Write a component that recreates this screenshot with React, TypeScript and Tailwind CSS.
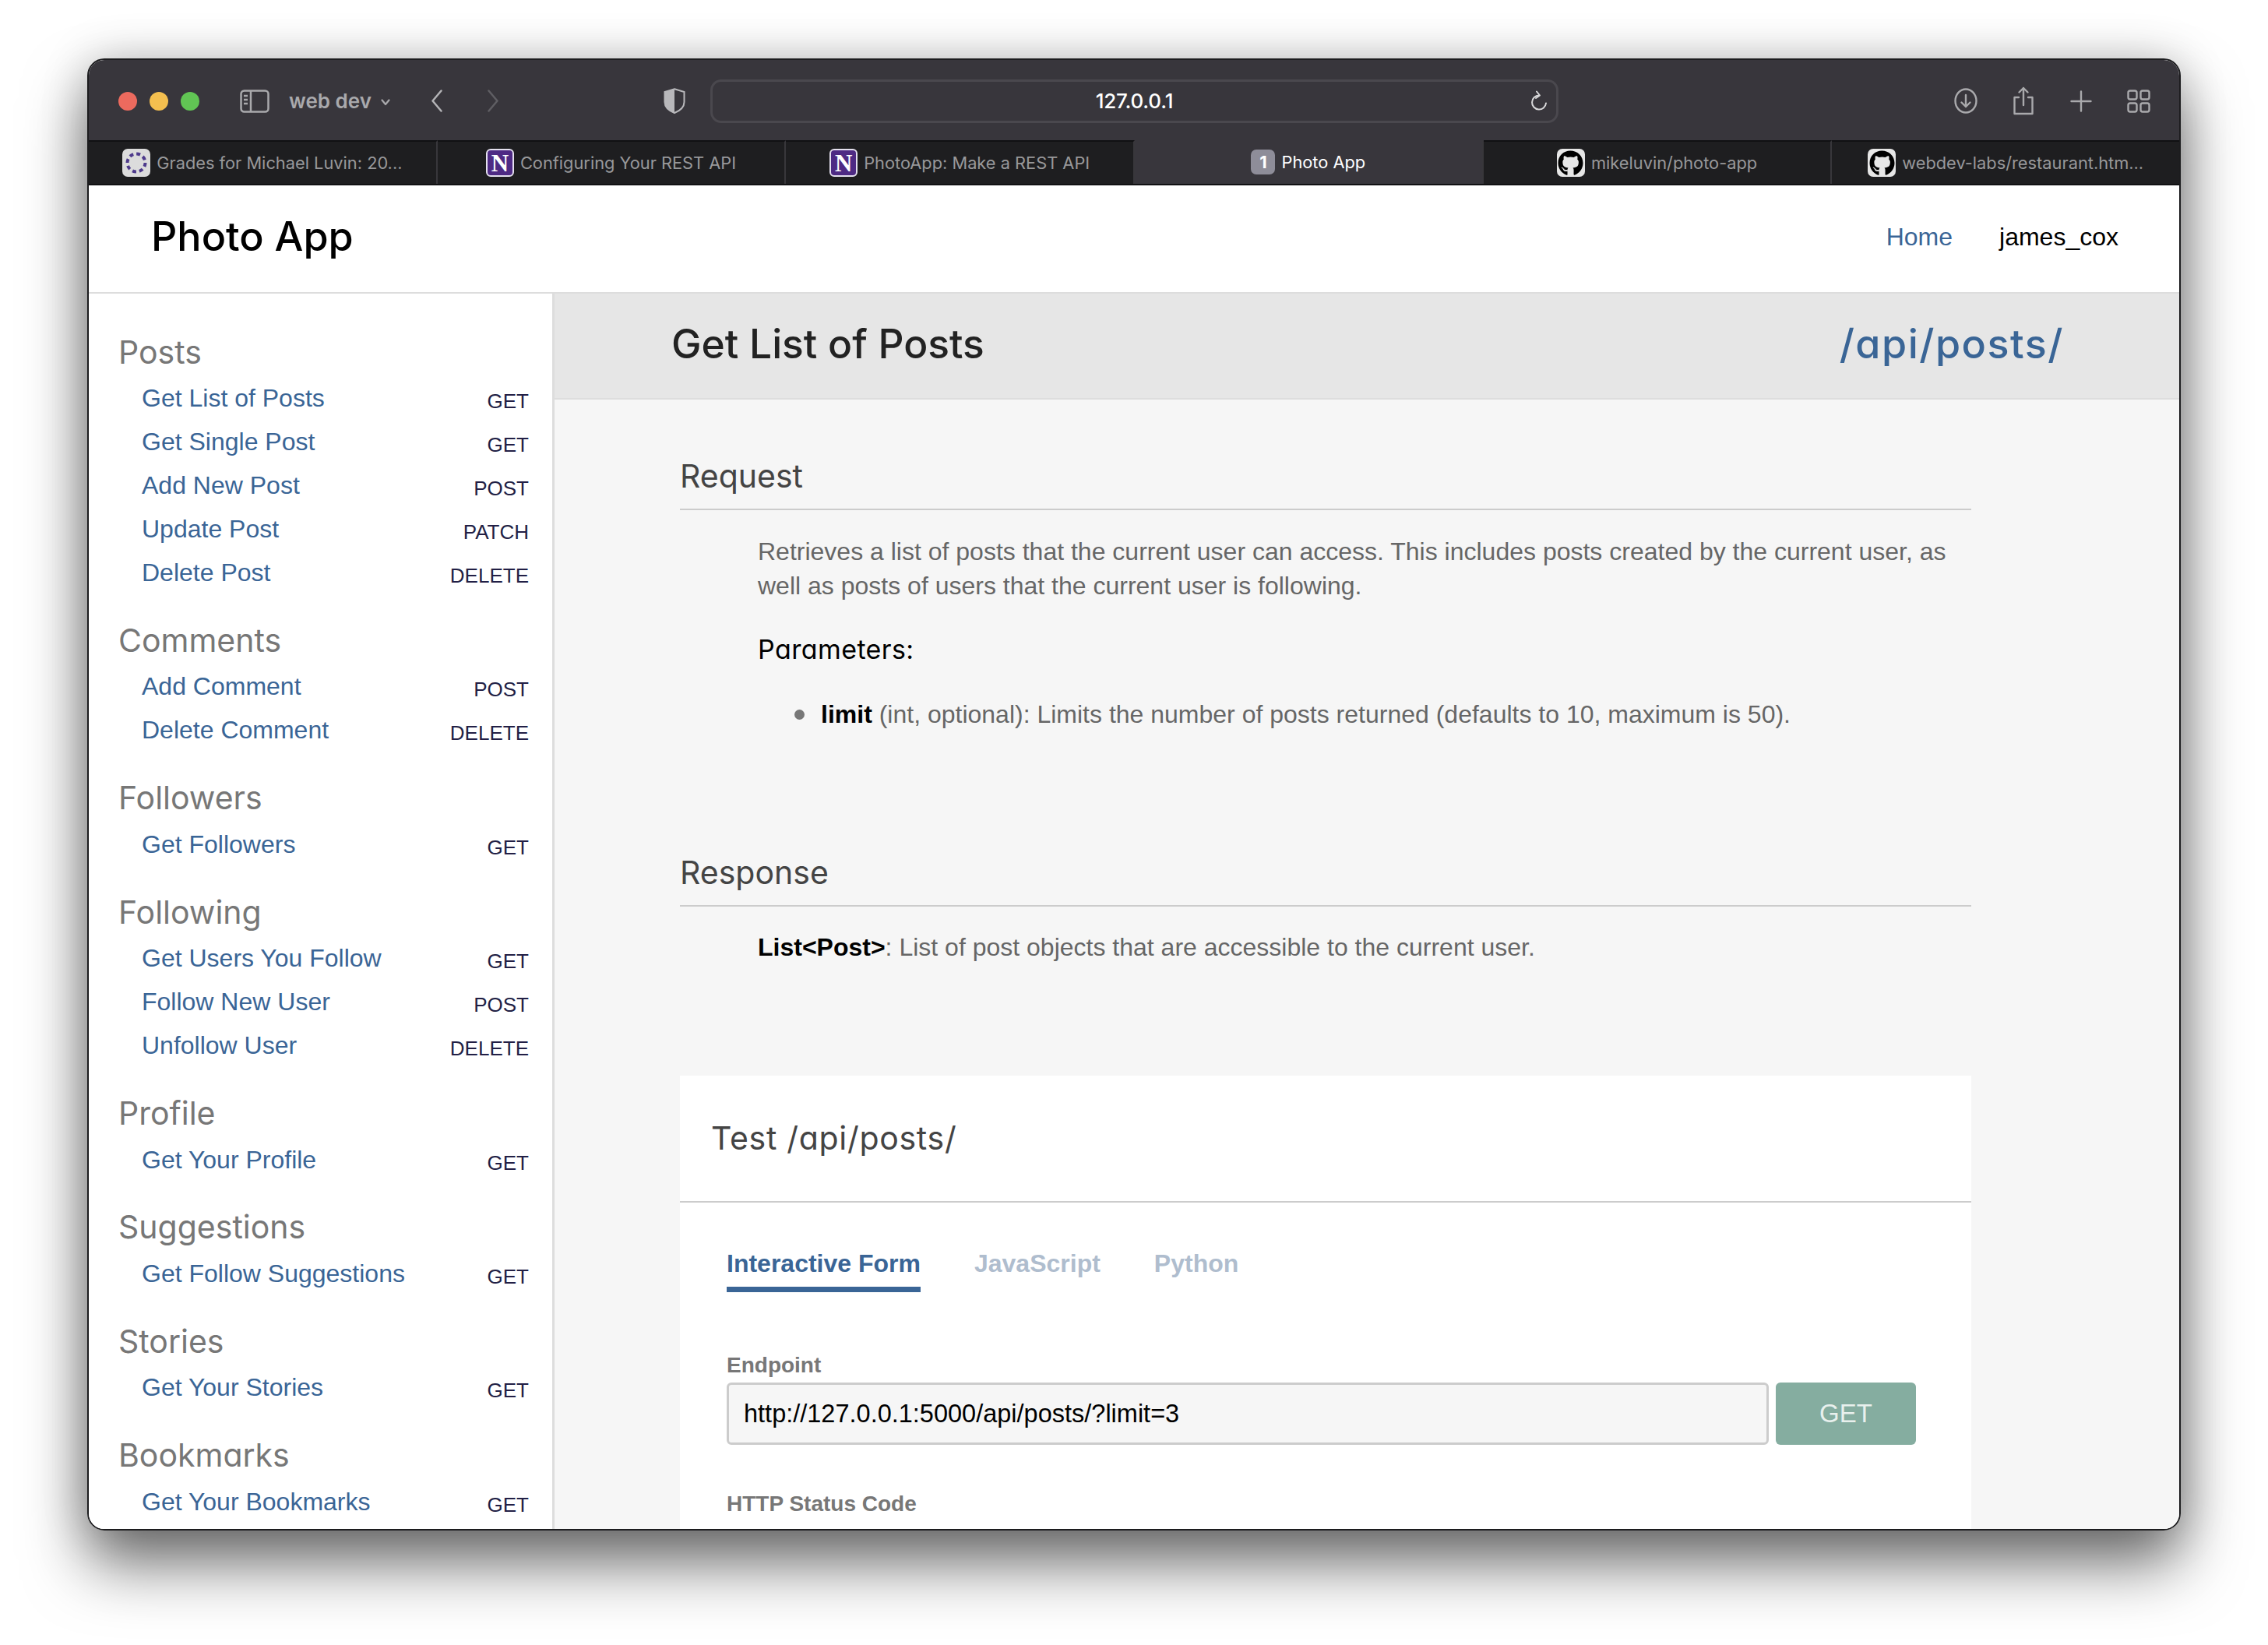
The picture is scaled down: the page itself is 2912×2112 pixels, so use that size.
import { FaGithub } from 'react-icons/fa'

const heading = "font-['Inter',sans-serif] [font-feature-settings:'cv11']"
const body = "font-['Liberation_Sans',Arial,sans-serif]"

const sections = [
  { title: 'Posts', rows: [['Get List of Posts', 'GET'], ['Get Single Post', 'GET'], ['Add New Post', 'POST'], ['Update Post', 'PATCH'], ['Delete Post', 'DELETE']] },
  { title: 'Comments', rows: [['Add Comment', 'POST'], ['Delete Comment', 'DELETE']] },
  { title: 'Followers', rows: [['Get Followers', 'GET']] },
  { title: 'Following', rows: [['Get Users You Follow', 'GET'], ['Follow New User', 'POST'], ['Unfollow User', 'DELETE']] },
  { title: 'Profile', rows: [['Get Your Profile', 'GET']] },
  { title: 'Suggestions', rows: [['Get Follow Suggestions', 'GET']] },
  { title: 'Stories', rows: [['Get Your Stories', 'GET']] },
  { title: 'Bookmarks', rows: [['Get Your Bookmarks', 'GET']] },
]

function CanvasIcon() {
  return (
    <span className="flex h-[36px] w-[36px] items-center justify-center rounded-[7px] bg-[#dcdcdc]">
      <svg width="30" height="30" viewBox="0 0 30 30">
        <circle cx="15" cy="15" r="11.5" fill="none" stroke="#4e3a8c" strokeWidth="4" strokeDasharray="5 4" />
      </svg>
    </span>
  )
}

function NorthwesternIcon() {
  return (
    <span className="flex h-[36px] w-[36px] items-center justify-center rounded-[6px] border-2 border-[#e4e0ee] bg-[#4e2a84] font-['Liberation_Serif',serif] text-[31px] leading-none font-bold text-white">
      N
    </span>
  )
}

function GithubIcon() {
  return (
    <span className="flex h-[36px] w-[36px] items-center justify-center rounded-[7px] bg-[#e6e6e6] text-black">
      <FaGithub size={33} />
    </span>
  )
}

function Tab({ icon, label, active }: { icon?: React.ReactNode; label: string; active?: boolean }) {
  return (
    <div className={`flex h-full min-w-0 flex-1 items-center justify-center gap-[8px] border-r-2 border-r-[#38373b] last:border-r-0 ${active ? 'bg-[#38363c] text-white' : 'border-t-2 border-t-[#111113] text-[#98989a]'}`}>
      {icon}
      <span className="pt-[2px] text-[21.800px] leading-none whitespace-nowrap">{label}</span>
    </div>
  )
}

function Toolbar() {
  return (
    <div className="flex h-[103px] shrink-0 items-center bg-[#38363c] pt-[2px]">
      <div className="ml-[38px] flex gap-[16px]">
        <span className="h-[24px] w-[24px] rounded-full bg-[#ec6a5e]" />
        <span className="h-[24px] w-[24px] rounded-full bg-[#f4bf4f]" />
        <span className="h-[24px] w-[24px] rounded-full bg-[#61c554]" />
      </div>
      <svg className="ml-[52px]" width="38" height="30" viewBox="0 0 38 30" fill="none" stroke="#a9a9ac" strokeWidth="2.5">
        <rect x="1.5" y="1.5" width="35" height="27" rx="4" />
        <path d="M14 2v26M5 8h5M5 13h5M5 18h5" />
      </svg>
      <span className="ml-[25px] text-[26px] leading-none font-semibold text-[#a9a9ac]">web dev</span>
      <svg className="ml-[12px] mt-[4px]" width="12" height="9" viewBox="0 0 12 9" fill="none" stroke="#a9a9ac" strokeWidth="2.2" strokeLinecap="round" strokeLinejoin="round">
        <path d="M1.5 1.5 6 7l4.5-5.5" />
      </svg>
      <svg className="ml-[53px]" width="14" height="29" viewBox="0 0 14 29" fill="none" stroke="#b3b3b6" strokeWidth="2.5" strokeLinecap="round" strokeLinejoin="round">
        <path d="M12.5 1.5 1.5 14.5l11 13" />
      </svg>
      <svg className="ml-[58px]" width="14" height="29" viewBox="0 0 14 29" fill="none" stroke="#5f5e63" strokeWidth="2.5" strokeLinecap="round" strokeLinejoin="round">
        <path d="M1.5 1.5 12.5 14.5l-11 13" />
      </svg>
      <svg className="ml-[212px]" width="28" height="33" viewBox="0 0 28 33" fill="none">
        <path d="M14 1.2 26.5 5v13c0 6-5 11-12.5 14C6.500 29 1.500 24 1.500 18V5z" stroke="#b8b8bb" strokeWidth="2" />
        <path d="M14 1.200V32C6.500 29 1.500 24 1.500 18V5z" fill="#b8b8bb" />
      </svg>
      <div className="relative ml-[32px] flex h-[56px] w-[1089px] items-center justify-center rounded-[14px] border-[3px] border-[#4a484e]">
        <span className="text-[26px] leading-none font-medium tracking-[-0.200px] text-white">127.0.0.1</span>
        <svg className="absolute top-[11px] right-[11px]" width="22" height="28" viewBox="0 0 22 28" fill="none" stroke="#d8d8da" strokeWidth="2" strokeLinecap="round" strokeLinejoin="round">
          <path d="M11 6.500a9 9 0 1 0 9 10" />
          <path d="M8 1.500 12 6.500 7 10" />
        </svg>
      </div>
      <svg className="ml-[508px]" width="30" height="33" viewBox="0 0 30 33" fill="none" stroke="#a9a9ac" strokeWidth="2.400" strokeLinecap="round" strokeLinejoin="round">
        <ellipse cx="15" cy="16.500" rx="13.500" ry="15" />
        <path d="M15 9v15M9.500 18.500l5.500 5.500 5.500-5.500" />
      </svg>
      <svg className="ml-[44px]" width="30" height="37" viewBox="0 0 30 37" fill="none" stroke="#a9a9ac" strokeWidth="2.400" strokeLinecap="round" strokeLinejoin="round">
        <path d="M9 14H3.500v21h23V14H21M15 24V2M9.500 7.500 15 2l5.500 5.500" />
      </svg>
      <svg className="ml-[45px]" width="28" height="28" viewBox="0 0 28 28" fill="none" stroke="#a9a9ac" strokeWidth="2.400" strokeLinecap="round">
        <path d="M14 1.500v25M1.500 14h25" />
      </svg>
      <svg className="ml-[45px]" width="30" height="30" viewBox="0 0 30 30" fill="none" stroke="#a9a9ac" strokeWidth="2.400">
        <rect x="1.500" y="1.500" width="11" height="11" rx="2.500" />
        <rect x="17.500" y="1.500" width="11" height="11" rx="2.500" />
        <rect x="1.500" y="17.500" width="11" height="11" rx="2.500" />
        <rect x="17.500" y="17.500" width="11" height="11" rx="2.500" />
      </svg>
    </div>
  )
}

function Sidebar() {
  return (
    <aside className={`w-[598px] shrink-0 border-r-[3px] border-[#dddddd] bg-white pt-[44px] ${body}`}>
      {sections.map((s) => (
        <section key={s.title} className="mb-[28.400px]">
          <h2 className={`flex h-[62px] items-center pl-[38px] text-[41px] leading-none text-[#777777] ${heading}`}>{s.title}</h2>
          {s.rows.map(([name, method]) => (
            <div key={name} className="flex h-[56px] items-center justify-between pr-[30px] pl-[68px]">
              <a className="text-[32px] leading-none text-[#3a6596]">{name}</a>
              <span className="mt-[8px] text-[26px] leading-none text-[#221f45]">{method}</span>
            </div>
          ))}
        </section>
      ))}
    </aside>
  )
}

function SectionTitle({ children }: { children: string }) {
  return <h2 className={`flex h-[72px] items-center border-b-2 border-[#cccccc] pb-[14px] text-[41px] leading-none text-[#444444] ${heading}`}>{children}</h2>
}

function Main() {
  return (
    <main className={`min-w-0 flex-1 overflow-hidden bg-[#f6f6f6] ${body}`}>
      <div className="flex h-[136px] items-center justify-between border-b-2 border-[#dddddd] bg-[#e6e6e6] pr-[148px] pb-[5px] pl-[150px]">
        <h1 className={`text-[51.500px] leading-none font-medium text-[#222222] ${heading}`}>Get List of Posts</h1>
        <span className={`text-[52px] leading-none font-medium tracking-[1.500px] text-[#3a6596] ${heading}`}>/api/posts/</span>
      </div>
      <div className="mr-[267px] ml-[161px]">
        <div className="mt-[70px]">
          <SectionTitle>Request</SectionTitle>
          <div className="pl-[100px] text-[32px] leading-[44px] text-[#666666]">
            <p className="mt-[31px]">Retrieves a list of posts that the current user can access. This includes posts created by the current user, as well as posts of users that the current user is following.</p>
            <p className={`mt-[38px] text-[34px] tracking-[0.400px] text-black ${heading}`}>Parameters:</p>
            <ul className="mt-[39px] ml-[47px] list-none">
              <li className="flex items-center gap-[21px]">
                <span className="h-[13px] w-[13px] rounded-full bg-[#777777]" />
                <span><b className="text-black">limit</b> (int, optional): Limits the number of posts returned (defaults to 10, maximum is 50).</span>
              </li>
            </ul>
          </div>
        </div>
        <div className="mt-[153px]">
          <SectionTitle>Response</SectionTitle>
          <p className="mt-[30px] pl-[100px] text-[32px] leading-[44px] text-[#666666]"><b className="text-black">{'List<Post>'}</b>: List of post objects that are accessible to the current user.</p>
        </div>
        <div className="mt-[143px] bg-white pb-[200px]">
          <div className="flex h-[163px] items-center border-b-2 border-[#cccccc] pl-[40px]">
            <h3 className={`text-[41px] leading-none tracking-[0.700px] text-[#444444] ${heading}`}>Test /api/posts/</h3>
          </div>
          <div className="px-[60px]">
            <div className="mt-[62px] flex gap-[69px] text-[32px] leading-none font-bold text-[#afbdce]">
              <span className="border-b-[7px] border-[#3a6596] pb-[14px] text-[#3a6596]">Interactive Form</span>
              <span>JavaScript</span>
              <span>Python</span>
            </div>
            <label className="mt-[78px] block text-[28px] leading-[32px] font-bold text-[#777777]">Endpoint</label>
            <div className="mt-[6px] flex gap-[9px]">
              <div className="flex h-[80px] w-[1338px] items-center rounded-[6px] border-[3px] border-[#cccccc] bg-[#f6f6f6] pl-[19px] text-[32.500px] text-black">http://127.0.0.1:5000/api/posts/?limit=3</div>
              <button className="h-[80px] w-[180px] rounded-[6px] bg-[#85ada0] text-[33px] text-[#e8f0ed]">GET</button>
            </div>
            <label className="mt-[60px] block text-[28px] leading-[32px] font-bold text-[#777777]">HTTP Status Code</label>
          </div>
        </div>
      </div>
    </main>
  )
}

export default function App() {
  return (
    <div className="h-[2112px] w-[2912px] overflow-hidden bg-white pt-[75px] pl-[112px] font-['Inter',sans-serif]">
      <div className="flex h-[1890px] w-[2688px] flex-col overflow-hidden rounded-[22px] border-2 border-[#1c1c1e] shadow-[0_0_60px_rgba(0,0,0,0.2),0_44px_80px_rgba(0,0,0,0.55)]">
        <Toolbar />
        <div className="flex h-[58px] shrink-0 items-center border-b-2 border-[#111113] bg-[#1e1e20]">
          <Tab icon={<CanvasIcon />} label="Grades for Michael Luvin: 20..." />
          <Tab icon={<NorthwesternIcon />} label="Configuring Your REST API" />
          <Tab icon={<NorthwesternIcon />} label="PhotoApp: Make a REST API" />
          <Tab
            active
            icon={<span className="flex h-[32px] w-[31px] items-center justify-center rounded-[7px] bg-[#8e8d99] text-[22px] font-bold text-white">1</span>}
            label="Photo App"
          />
          <Tab icon={<GithubIcon />} label="mikeluvin/photo-app" />
          <Tab icon={<GithubIcon />} label="webdev-labs/restaurant.htm..." />
        </div>
        <header className={`flex h-[139px] shrink-0 items-center justify-between border-b-2 border-[#dddddd] bg-white pr-[78px] pb-[6px] pl-[80px] ${body}`}>
          <span className={`text-[52px] leading-none font-medium text-black ${heading}`}>Photo App</span>
          <nav className="flex items-center gap-[60px] text-[32px] leading-none">
            <a className="text-[#3a6596]">Home</a>
            <span className="text-black">james_cox</span>
          </nav>
        </header>
        <div className="flex min-h-0 flex-1">
          <Sidebar />
          <Main />
        </div>
      </div>
    </div>
  )
}
